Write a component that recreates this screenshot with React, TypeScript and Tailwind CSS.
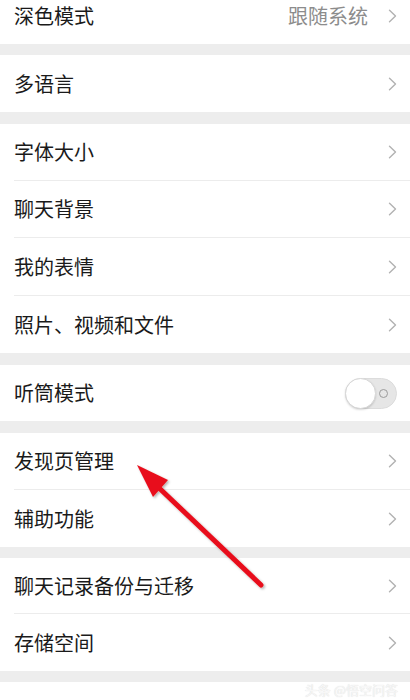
import React from "react";

const font = { fontFamily: '"Noto Sans CJK SC", "Noto Sans", sans-serif' };

function Chevron() {
  return (
    <svg width="9" height="14" viewBox="0 0 9 14" className="shrink-0">
      <path d="M1.5 1.2 L7.5 7 L1.5 12.8" fill="none" stroke="#b2b2b2" strokeWidth="1.4" strokeLinecap="round" strokeLinejoin="round" />
    </svg>
  );
}

function Toggle() {
  return (
    <div className="relative w-[52px] h-[31px] rounded-full bg-[#e6e6e6] border border-[#dcdcdc] flex items-center">
      <div className="absolute left-[-1px] top-[-1px] w-[31px] h-[31px] rounded-full bg-white border border-[#d8d8d8] shadow-[0_1px_2px_rgba(0,0,0,0.15)]" />
      <div className="absolute right-[8px] w-[9px] h-[9px] rounded-full border border-[#9a9a9a]" />
    </div>
  );
}

type RowProps = {
  label: string;
  value?: string;
  toggle?: boolean;
  divider?: boolean;
  h?: string;
};

function Row({ label, value, toggle, divider, h = "h-[57px]" }: RowProps) {
  return (
    <div className={`bg-white pl-[14px] ${h}`}>
      <div className={`h-full flex items-center pr-[13px] ${divider ? "border-b border-[#ececec]" : ""}`}>
        <span className="flex-1 text-[20px] text-[#1a1a1a] leading-none">{label}</span>
        {value && <span className="text-[20px] text-[#8c8c8c] leading-none mr-[20px]">{value}</span>}
        {toggle ? <Toggle /> : <Chevron />}
      </div>
    </div>
  );
}

function Gap({ h }: { h: string }) {
  return <div className={`bg-[#ededed] ${h}`} />;
}

export default function App() {
  return (
    <div className="relative w-[410px] h-[700px] overflow-hidden bg-white" style={font}>
      <div className="-mt-[13px]">
        <Row label="深色模式" value="跟随系统" />
        <Gap h="h-[11px]" />
        <Row label="多语言" />
        <Gap h="h-[12px]" />
        <Row label="字体大小" divider />
        <Row label="聊天背景" divider h="h-[57px]" />
        <Row label="我的表情" divider h="h-[58px]" />
        <Row label="照片、视频和文件" h="h-[57px]" />
        <Gap h="h-[12px]" />
        <Row label="听筒模式" toggle h="h-[56px]" />
        <Gap h="h-[12px]" />
        <Row label="发现页管理" divider />
        <Row label="辅助功能" />
        <Gap h="h-[11px]" />
        <Row label="聊天记录备份与迁移" divider h="h-[56px]" />
        <Row label="存储空间" />
        <Gap h="h-[11px]" />
        <div className="flex justify-end pr-[12px] pt-[1px]">
          <span className="text-[13px] text-[#f7f7f7] leading-none [text-shadow:0_0_1px_rgba(0,0,0,0.18)]">头条 @悟空问答</span>
        </div>
      </div>

      {/* red annotation arrow */}
      <svg className="absolute left-0 top-0 pointer-events-none" width="410" height="700" viewBox="0 0 410 700">
        <defs>
          <filter id="sh" x="-20%" y="-20%" width="140%" height="140%">
            <feDropShadow dx="1.5" dy="1.5" stdDeviation="1.2" floodColor="#000" floodOpacity="0.3" />
          </filter>
        </defs>
        <g filter="url(#sh)">
          <line x1="157" y1="486" x2="261" y2="585" stroke="#e8111a" strokeWidth="5" strokeLinecap="round" />
          <polygon points="137,465 168,480 153,497" fill="#e8111a" />
        </g>
      </svg>
    </div>
  );
}
